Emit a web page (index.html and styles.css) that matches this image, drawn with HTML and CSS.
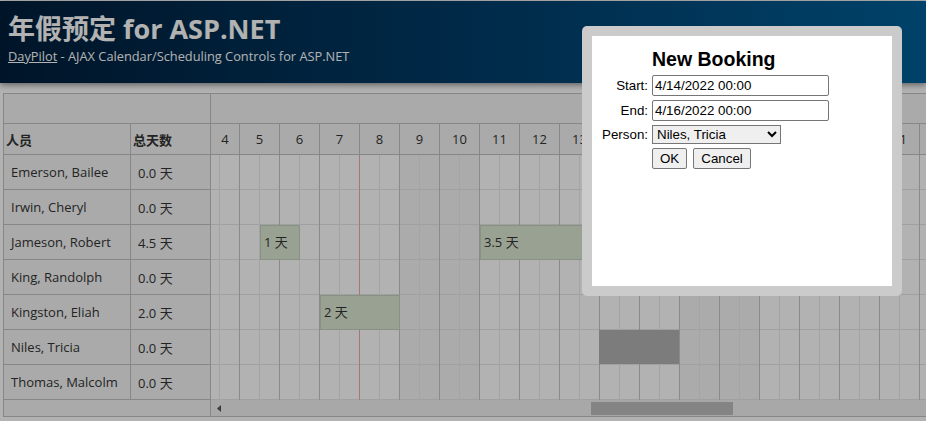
FILE: index.html
```html
<!DOCTYPE html>
<html lang="zh">
  <head>
    <meta charset="UTF-8" />
    <meta name="viewport" content="width=device-width, initial-scale=1.0" />
    <title>年假预定 for ASP.NET</title>
    <link rel="stylesheet" href="styles.css">
  </head>
  <body>
    <header class="main-header">
      <h1>年假预定 for ASP.NET</h1>
      <div class="subtitle"><a href="#">DayPilot</a> - AJAX Calendar/Scheduling Controls for ASP.NET</div>
    </header>

    <div class="scheduler">
      <div class="rowheaders">
        <div class="corner"></div>
        <div class="rh-row rh-head">
          <div class="rh-name">人员</div>
          <div class="rh-total">总天数</div>
        </div>
        <div class="rh-row"><div class="rh-name">Emerson, Bailee</div><div class="rh-total">0.0 天</div></div>
        <div class="rh-row"><div class="rh-name">Irwin, Cheryl</div><div class="rh-total">0.0 天</div></div>
        <div class="rh-row"><div class="rh-name">Jameson, Robert</div><div class="rh-total">4.5 天</div></div>
        <div class="rh-row"><div class="rh-name">King, Randolph</div><div class="rh-total">0.0 天</div></div>
        <div class="rh-row"><div class="rh-name">Kingston, Eliah</div><div class="rh-total">2.0 天</div></div>
        <div class="rh-row"><div class="rh-name">Niles, Tricia</div><div class="rh-total">0.0 天</div></div>
        <div class="rh-row"><div class="rh-name">Thomas, Malcolm</div><div class="rh-total">0.0 天</div></div>
        <div class="rh-scroll"></div>
      </div>

      <div class="timeline">
        <div class="tl-top"></div>
        <div class="tl-days">
          <div class="day first">4</div>
          <div class="day">5</div>
          <div class="day">6</div>
          <div class="day">7</div>
          <div class="day">8</div>
          <div class="day">9</div>
          <div class="day">10</div>
          <div class="day">11</div>
          <div class="day">12</div>
          <div class="day">13</div>
          <div class="day">14</div>
          <div class="day">15</div>
          <div class="day">16</div>
          <div class="day">17</div>
          <div class="day">18</div>
          <div class="day">19</div>
          <div class="day">20</div>
          <div class="day">21</div>
          <div class="day">22</div>
        </div>
        <div class="tl-body">
          <div class="col first"></div>
          <div class="col"></div>
          <div class="col"></div>
          <div class="col"></div>
          <div class="col"></div>
          <div class="col weekend"></div>
          <div class="col weekend"></div>
          <div class="col"></div>
          <div class="col"></div>
          <div class="col"></div>
          <div class="col"></div>
          <div class="col"></div>
          <div class="col weekend"></div>
          <div class="col weekend"></div>
          <div class="col"></div>
          <div class="col"></div>
          <div class="col"></div>
          <div class="col"></div>
          <div class="col"></div>

          <div class="separator" style="left: 148px"></div>
          <div class="event" style="left: 49px; top: 70px; width: 40px">1 天</div>
          <div class="event" style="left: 269px; top: 70px; width: 140px">3.5 天</div>
          <div class="event" style="left: 109px; top: 140px; width: 80px">2 天</div>
          <div class="selection" style="left: 388px; top: 175px; width: 80px"></div>
        </div>
        <div class="tl-scroll">
          <svg class="scroll-arrow" width="4" height="7" viewBox="0 0 4 7">
            <path d="M4 0V7L0 3.5Z" fill="currentColor" />
          </svg>
          <div class="scroll-thumb"></div>
        </div>
      </div>
    </div>

    <div class="overlay"></div>

    <div class="modal">
      <div class="modal-inner">
        <form class="booking" onsubmit="return false">
          <h2>New Booking</h2>
          <label for="start">Start:</label>
          <input type="text" id="start" value="4/14/2022 00:00" />
          <label for="end">End:</label>
          <input type="text" id="end" value="4/16/2022 00:00" />
          <label for="resource">Person:</label>
          <select id="resource">
            <option>Emerson, Bailee</option>
            <option>Irwin, Cheryl</option>
            <option>Jameson, Robert</option>
            <option>King, Randolph</option>
            <option>Kingston, Eliah</option>
            <option selected>Niles, Tricia</option>
            <option>Thomas, Malcolm</option>
          </select>
          <div class="buttons">
            <button type="submit">OK</button>
            <button type="button">Cancel</button>
          </div>
        </form>
      </div>
    </div>
  </body>
</html>
```

FILE: styles.css
```css
body {
  margin: 0;
  padding-top: 1px;
  font-family: "Open Sans", "Noto Sans CJK SC", sans-serif;
  font-size: 13px;
  color: #333;
  background: #fff;
  overflow: hidden;
}

/* page header */
.main-header {
  height: 82px;
  box-sizing: border-box;
  padding: 10px 8px 0;
  background: linear-gradient(90deg, #001e3a 0%, #003f6c 55%, #005f98 100%);
  color: #fff;
  box-shadow: 0 2px 6px rgba(0, 0, 0, 0.45);
}
.main-header h1 {
  margin: 0;
  font-size: 27px;
  line-height: 36px;
  font-weight: 700;
}
.subtitle {
  font-size: 12.8px;
  line-height: 18px;
}
.subtitle a {
  color: #fff;
}

/* scheduler */
.scheduler {
  display: flex;
  margin: 10px 0 0 3px;
  border: 1px solid #c2c2c2;
  border-right: none;
  overflow: hidden;
}
.rowheaders {
  width: 206px;
  flex-shrink: 0;
  background: #f4f4f4;
  border-right: 1px solid #c2c2c2;
}
.corner {
  height: 29px;
  border-bottom: 1px solid #c2c2c2;
}
.rh-row {
  display: flex;
  height: 34px;
  border-bottom: 1px solid #c2c2c2;
}
.rh-row.rh-head {
  height: 30px;
  font-weight: 700;
}
.rh-name,
.rh-total {
  display: flex;
  align-items: center;
  padding-left: 7px;
}
.rh-name {
  width: 119px;
  border-right: 1px solid #c2c2c2;
}
.rh-total {
  flex: 1;
}
.rh-head .rh-name,
.rh-head .rh-total {
  padding-left: 2px;
}
.rh-head .rh-name {
  width: 124px;
}
.rh-scroll {
  height: 16px;
}

.timeline {
  flex: 1;
  min-width: 0;
  overflow: hidden;
}
.tl-top {
  height: 29px;
  background: #f4f4f4;
  border-bottom: 1px solid #c2c2c2;
}
.tl-days {
  display: flex;
  height: 30px;
  background: #f4f4f4;
  border-bottom: 1px solid #c2c2c2;
}
.day {
  flex-shrink: 0;
  width: 39px;
  border-right: 1px solid #c2c2c2;
  display: flex;
  align-items: center;
  justify-content: center;
}
.day.first {
  width: 28px;
}
.tl-body {
  position: relative;
  display: flex;
  height: 245px;
}
.col {
  flex-shrink: 0;
  width: 39px;
  border-right: 1px solid #c6c6c6;
  background-color: #fff;
  background-image: linear-gradient(#ebebeb, #ebebeb),
    repeating-linear-gradient(180deg, transparent 0 34px, #e6e6e6 34px 35px);
  background-repeat: no-repeat, repeat;
  background-size: 1px 100%, auto;
  background-position: right 19px top, 0 0;
}
.col.first {
  width: 28px;
}
.col.weekend {
  background-color: #f5f5f5;
}
.separator {
  position: absolute;
  top: 0;
  bottom: 0;
  width: 1px;
  background: #f2a8a8;
}
.event {
  position: absolute;
  height: 35px;
  box-sizing: border-box;
  padding-left: 3px;
  line-height: 33px;
  background: #dbe9d1;
  border: 1px solid #c3d0bd;
  white-space: nowrap;
  overflow: hidden;
}
.selection {
  position: absolute;
  height: 34px;
  background: #b2b2b2;
}
.tl-scroll {
  display: flex;
  align-items: center;
  height: 16px;
  padding-left: 6px;
  background: #f1f1f1;
}
.scroll-arrow {
  color: #555;
  flex-shrink: 0;
}
.scroll-thumb {
  flex-shrink: 0;
  width: 142px;
  height: 13px;
  margin-left: 370px;
  background: #bebebe;
}

/* modal */
.overlay {
  position: fixed;
  inset: 0;
  background: rgba(0, 0, 0, 0.3);
}
.modal {
  position: absolute;
  left: 582px;
  top: 26px;
  width: 300px;
  height: 250px;
  padding: 10px;
  background: #cbcbcb;
  border-radius: 5px;
}
.modal-inner {
  height: 100%;
  background: #fff;
}
.booking {
  display: grid;
  grid-template-columns: 56px auto;
  justify-content: start;
  align-items: center;
  column-gap: 4px;
  row-gap: 4px;
  padding-top: 12px;
  font-family: "Liberation Sans", Arial, sans-serif;
  font-size: 13.33px;
  color: #000;
}
.booking h2 {
  grid-column: 2;
  margin: 0 0 1px;
  font-size: 19.5px;
  line-height: 22px;
}
.booking label {
  text-align: right;
}
.booking input {
  width: 177px;
  height: 21px;
  box-sizing: border-box;
  padding: 1px 2px;
  border: 1px solid #767676;
  border-radius: 2px;
  font: inherit;
  color: #000;
}
.booking select {
  width: 129px;
  height: 19px;
  font: inherit;
  color: #000;
  border: 1px solid #767676;
}
.buttons {
  grid-column: 2;
  display: flex;
  gap: 6px;
}
.buttons button {
  height: 21px;
  padding: 1px 7px;
  font: inherit;
  color: #000;
  background: #efefef;
  border: 1px solid #767676;
  border-radius: 2px;
}
```
